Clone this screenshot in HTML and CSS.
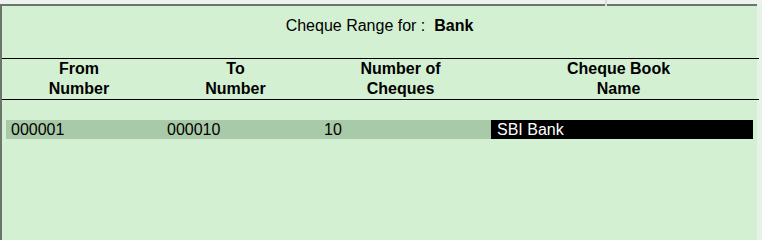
FILE: index.html
```html
<!DOCTYPE html>
<html>
<head>
<meta charset="utf-8">
<link rel="stylesheet" href="styles.css">
</head>
<body>
<div class="page">
  <div class="topstrip"><span class="tick"></span></div>
  <div class="frame">
    <div class="title">Cheque Range for :&nbsp; <b>Bank</b></div>
    <div class="header">
      <div class="hcell">From<br>Number</div>
      <div class="hcell">To<br>Number</div>
      <div class="hcell">Number of<br>Cheques</div>
      <div class="hcell">Cheque Book<br>Name</div>
    </div>
    <div class="row">
      <div class="cell">000001</div>
      <div class="cell">000010</div>
      <div class="cell">10</div>
      <div class="cell sel">SBI Bank</div>
    </div>
  </div>
</div>
</body>
</html>
```
FILE: styles.css
```css
html, body {
  margin: 0;
  padding: 0;
  height: 100%;
  background: #e6f2e6;
  font-family: "Liberation Sans", Arial, sans-serif;
  font-size: 16px;
  color: #000;
}
.page {
  width: 762px;
  height: 100%;
  min-height: 221px;
  display: flex;
  flex-direction: column;
  overflow: hidden;
}
.topstrip {
  flex: 0 0 4px;
  background: #eef2ee;
  position: relative;
}
.tick {
  position: absolute;
  left: 605px;
  top: 0;
  width: 2px;
  height: 6px;
  background: #d8dcd8;
}
.frame {
  flex: 1;
  width: 755px;
  background: #d3f0d3;
  border-top: 2px solid #6c756c;
  border-left: 2px solid #6c756c;
}
.title {
  height: 52px;
  box-sizing: border-box;
  padding-top: 10px;
  line-height: 20px;
  text-align: center;
}
.title b {
  font-weight: bold;
}
.header {
  display: grid;
  grid-template-columns: 154px 159px 171px 265px;
  border-top: 1px solid #000;
  border-bottom: 1px solid #000;
  width: 757px;
  height: 40px;
  font-weight: bold;
  line-height: 20px;
}
.hcell {
  text-align: center;
}
.row {
  display: grid;
  grid-template-columns: 156px 157px 172px 262px;
  margin: 20px 0 0 4px;
  height: 19px;
  line-height: 19px;
  background: #a9caa9;
  width: 747px;
}
.cell {
  padding-left: 5px;
}
.sel {
  background: #000;
  color: #fff;
  padding-left: 6px;
}
```
